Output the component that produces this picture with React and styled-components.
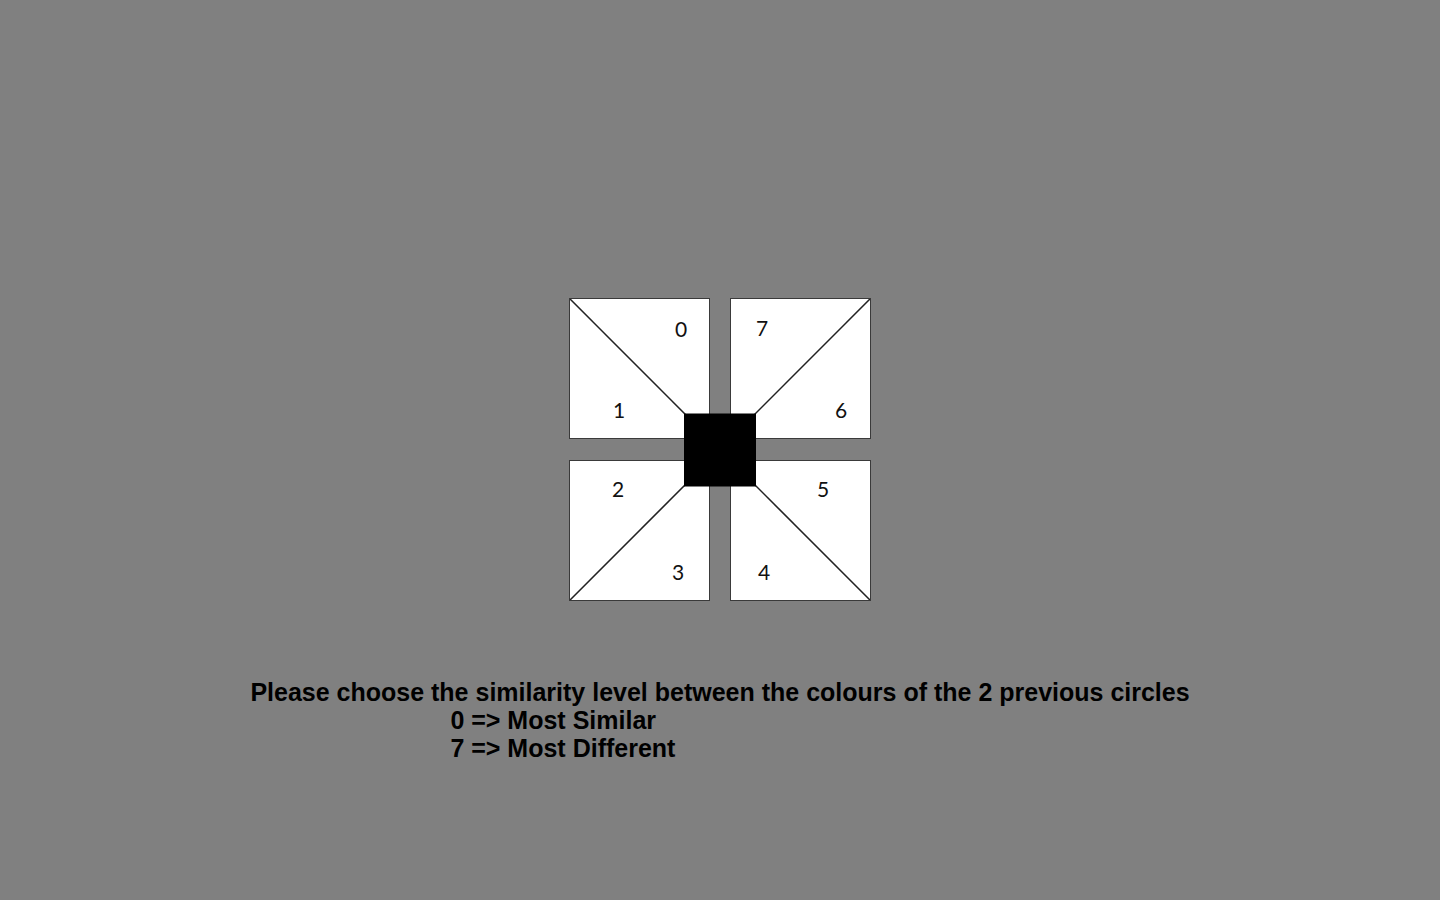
import React from 'react'
import styled, { createGlobalStyle } from 'styled-components'

const GlobalStyle = createGlobalStyle`
  html, body {
    margin: 0;
    padding: 0;
    background-color: #808080;
  }
`

const Page = styled.div`
  min-height: 100vh;
  display: flex;
  flex-direction: column;
  align-items: center;
  padding-top: 298px;
  box-sizing: border-box;
`

const Board = styled.div`
  position: relative;
  display: grid;
  grid-template-columns: 141px 141px;
  grid-template-rows: 141px 141px;
  column-gap: 20px;
  row-gap: 21px;
`

const Tile = styled.div`
  position: relative;
  background: #fff;
  border: 1px solid #3a3a3a;
  box-sizing: border-box;
`

const Diagonal = styled.svg`
  position: absolute;
  inset: 0;
  width: 100%;
  height: 100%;
`

const Label = styled.span`
  position: absolute;
  transform: translate(-50%, -50%);
  font-family: Lato, 'Open Sans', sans-serif;
  font-size: 21px;
  color: #111;
  line-height: 1;
`

const Center = styled.div`
  position: absolute;
  left: 50%;
  top: 50%;
  width: 72px;
  height: 73px;
  background: #000;
  transform: translate(-50%, -50%);
`

const Caption = styled.div`
  margin-top: 77px;
  font-family: 'Liberation Sans', Arial, sans-serif;
  font-weight: bold;
  font-size: 25px;
  line-height: 28px;
  color: #000;
`

const Line = styled.div`
  padding-left: ${p => p.$indent || 0}px;
  white-space: nowrap;
`

const tiles = [
  { line: [0, 0, 141, 141], labels: [['0', 111, 29], ['1', 49, 110]] },
  { line: [141, 0, 0, 141], labels: [['7', 31, 28], ['6', 110, 110]] },
  { line: [0, 141, 141, 0], labels: [['2', 48, 27], ['3', 108, 110]] },
  { line: [141, 141, 0, 0], labels: [['5', 92, 27], ['4', 33, 110]] }
]

export default function App () {
  return (
    <Page>
      <GlobalStyle />
      <Board>
        {tiles.map((t, i) => (
          <Tile key={i}>
            <Diagonal viewBox='0 0 141 141'>
              <line x1={t.line[0]} y1={t.line[1]} x2={t.line[2]} y2={t.line[3]} stroke='#222' strokeWidth='1.6' />
            </Diagonal>
            {t.labels.map(([n, x, y]) => (
              <Label key={n} style={{ left: x, top: y }}>{n}</Label>
            ))}
          </Tile>
        ))}
        <Center />
      </Board>
      <Caption>
        <Line>Please choose the similarity level between the colours of the 2 previous circles</Line>
        <Line $indent={200}>0 =&gt; Most Similar</Line>
        <Line $indent={200}>7 =&gt; Most Different</Line>
      </Caption>
    </Page>
  )
}
